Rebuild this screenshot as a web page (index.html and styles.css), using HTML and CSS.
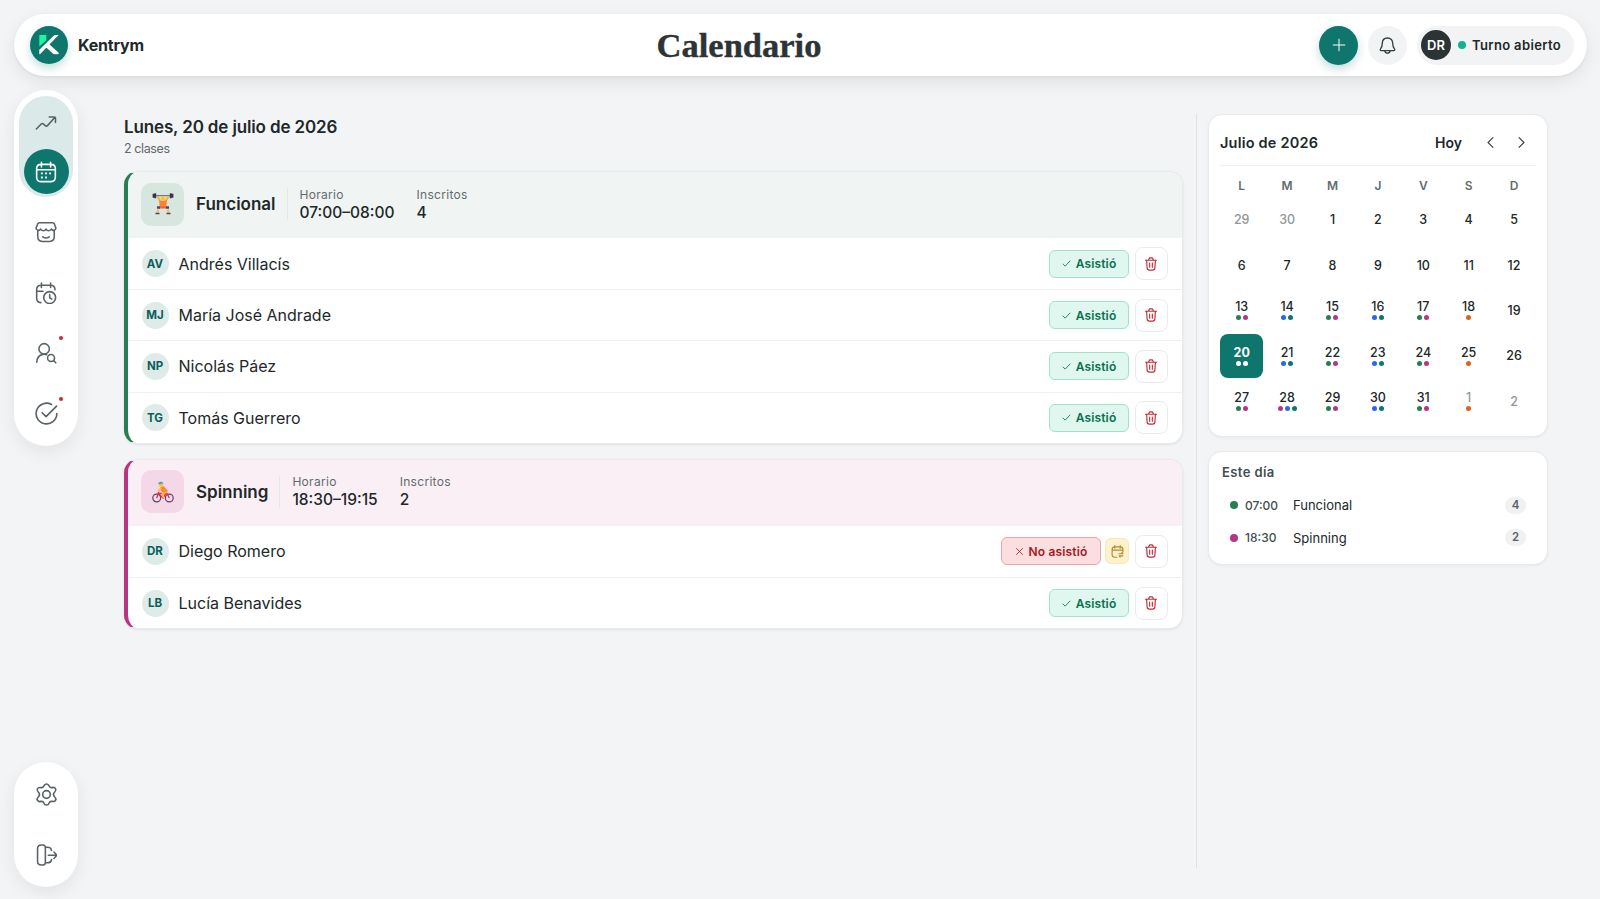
FILE: index.html
```html
<!DOCTYPE html>
<html lang="es">
<head>
  <meta charset="UTF-8">
  <meta name="viewport" content="width=device-width, initial-scale=1.0">
  <title>Calendario - Kentrym</title>
  <link rel="stylesheet" href="styles.css">
</head>
<body>
  <!-- Shared icons -->
  <svg class="sprite" width="0" height="0">
    <symbol id="i-check" viewBox="0 0 24 24"><path d="M3 13.500l5.500 5.500L21 5.500"/></symbol>
    <symbol id="i-x" viewBox="0 0 24 24"><path d="M4 4l16 16M20 4L4 20"/></symbol>
    <symbol id="i-trash" viewBox="0 0 24 24"><path d="M2.500 5.500h19M4.500 5.500l.8 13a4 4 0 0 0 4 4h5.400a4 4 0 0 0 4-4l.8-13M8 5.200l.7-2.200a2 2 0 0 1 1.900-1.500h2.800a2 2 0 0 1 1.900 1.500l.7 2.200M9.700 10.500v7M14.300 10.500v7"/></symbol>
  </svg>

  <header class="topbar">
    <div class="brand">
      <span class="logo">
        <svg width="22" height="22" viewBox="0 0 22 22"><path d="M1.300 1h7v5.300L1.300 12.500z" fill="#1df5a0"/><path d="M1.300 20.300v-4.600L15.200 2.200C16 1.400 16.700 1 17.800 1h2.900L3.900 18.300c-1 1-1.500 2-2.600 2zM8.300 13.600l3.200-3.200 8.900 8.100c.8.900.3 1.800-.8 1.800h-2.700c-1 0-1.700-.3-2.400-1z" fill="#fff"/></svg>
      </span>
      <span class="brand-name">Kentrym</span>
    </div>
    <h1>Calendario</h1>
    <div class="actions">
      <button class="add"><svg class="icon" width="14" height="14" viewBox="0 0 24 24"><path d="M12 2v20M2 12h20"/></svg></button>
      <button class="bell"><svg class="icon" width="19" height="19" viewBox="0 0 24 24"><path d="M12 2.500c-4.200 0-6.600 3-6.600 7 0 4.200-1 5.500-2.200 6.800-.8.900-.4 2.200.9 2.200h15.800c1.300 0 1.700-1.300.9-2.200-1.200-1.300-2.200-2.600-2.200-6.800 0-4-2.400-7-6.600-7zM8.500 18.800c.4 1.800 1.700 2.900 3.500 2.900s3.100-1.100 3.500-2.900"/></svg></button>
      <div class="shift">
        <span class="user">DR</span>
        <i class="online"></i>
        <span>Turno abierto</span>
      </div>
    </div>
  </header>

  <div class="layout">
    <aside class="rail">
      <nav class="pill">
        <div class="group">
          <a class="nav"><svg class="icon" width="22" height="22" viewBox="0 0 24 24"><path d="M1.500 18.500l5-5.200c1-1 1.800-1 2.800-.1l1.800 1.600c1 .9 1.900.8 2.800-.2l7.600-8.500M15.500 5.500l5.500-.1c1 0 1.400.5 1.400 1.400l-.1 4.500"/></svg></a>
          <a class="nav active"><svg class="icon" width="22" height="22" viewBox="0 0 24 24"><path d="M7 1.500v5M17 1.500v5M1.800 9.500h20.400M6.500 3.700h11c3.300 0 4.700 1.600 4.700 4.800v9c0 3.300-1.400 5-4.700 5h-11c-3.300 0-4.700-1.700-4.700-5v-9c0-3.200 1.400-4.800 4.700-4.800z"/><path class="dash" d="M6.500 13.500h2M11 13.500h2M15.500 13.500h2M6.500 18h2M11 18h2"/></svg></a>
        </div>
        <a class="nav"><svg class="icon" width="22" height="22" viewBox="0 0 24 24"><path d="M3 10v7c0 3.800 1.500 5.300 5 5.300h8c3.500 0 5-1.500 5-5.300v-7M4.800 2h14.400c1 0 1.500.4 1.900 1.200l1.500 3.800c.8 2.600-3.200 4.800-4.800 1.700-1.200 2.500-4.700 2.500-5.800 0-1.100 2.500-4.600 2.500-5.800 0C4.600 11.800.6 9.600 1.400 7l1.500-3.800C3.300 2.400 3.800 2 4.800 2zM8.500 17.200c2 1.600 5 1.600 7 0"/></svg></a>
        <a class="nav"><svg class="icon" width="22" height="22" viewBox="0 0 24 24"><path d="M7 1v5M17 1v5M1.800 10h7M21.800 8.500c0-3.300-1.500-5-5-5H6.800c-3.500 0-5 1.700-5 5v9c0 3.400 1.400 5 4.600 5"/><circle cx="16" cy="17" r="6.500"/><path d="M16 13.800v3.400l2.300 1.300"/></svg></a>
        <a class="nav notify"><svg class="icon" width="22" height="22" viewBox="0 0 24 24"><circle cx="10" cy="7.500" r="5.700"/><path d="M2 22c.2-5 2.800-7.800 6.500-8.500 1.500-.3 3-.2 4.300.3"/><circle cx="17.500" cy="17.500" r="3.800"/><path d="M20.300 20.300l2.400 2.400"/></svg></a>
        <a class="nav notify"><svg class="icon" width="23" height="23" viewBox="0 0 24 24"><path d="M17.200 2.600A10.800 10.800 0 1 0 22.800 12M7.500 11.200l4 4L22.500 4.300"/></svg></a>
      </nav>
      <nav class="pill">
        <a class="nav"><svg class="icon" width="23" height="23" viewBox="0 0 24 24"><circle cx="12" cy="12" r="4"/><path d="M9.200 3.200C9.800 1.600 10.700 1 12 1s2.200.6 2.800 2.200c.5 1.400 1.600 1.900 3 1.600 1.700-.4 2.900-.1 3.600 1.100.7 1.200.4 2.400-.8 3.500-1.500 1.500-1.500 3.700 0 5.200 1.200 1.100 1.500 2.300.8 3.500-.7 1.200-1.900 1.500-3.600 1.100-1.400-.3-2.500.2-3 1.600-.6 1.600-1.500 2.200-2.800 2.200s-2.200-.6-2.800-2.200c-.5-1.400-1.600-1.900-3-1.600-1.700.4-2.900.1-3.600-1.100-.7-1.200-.4-2.400.8-3.500 1.500-1.500 1.500-3.700 0-5.200C2.200 8.300 1.900 7.100 2.600 5.900c.7-1.200 1.900-1.500 3.600-1.100 1.400.3 2.500-.2 3-1.600z"/></svg></a>
        <a class="nav"><svg class="icon" width="22" height="22" viewBox="0 0 24 24"><path d="M7.500 1h1.200c1.800 0 2.600 1 2.600 3v16c0 2-.8 3-2.600 3H7c-2.800 0-4.200-1.300-4.200-4V5c0-2.700 1.400-4 4.200-4zM11.500 3.500h2c2.800 0 4.300 1.200 4.500 3.500M11.500 20.500h2c2.800 0 4.300-1.200 4.500-3.500M14.500 12.300h9M20.700 8.800l3.200 3.500-3.200 3.500"/></svg></a>
      </nav>
    </aside>

    <main>
      <h2>Lunes, 20 de julio de 2026</h2>
      <p class="count">2 clases</p>

      <section class="class-card green">
        <div class="class-head">
          <span class="class-icon">
            <svg width="22" height="22" viewBox="0 0 22 22"><path d="M2.500 2.700h17" stroke="#536171" stroke-width="1"/><path d="M1.500.8v4M3.300.3v5M18.700.3v5M20.500.8v4" stroke="#3b3050" stroke-width="1.800"/><path d="M5.500 3.500L8 7.500M16.500 3.500L14 7.500" stroke="#f6b32c" stroke-width="2"/><circle cx="11" cy="5.200" r="2.300" fill="#ffc42c"/><path d="M7 7l4 1 4-1-.8 7.500H7.800z" fill="#fb8038"/><path d="M5 14.500h3M14 14.500h3" stroke="#59415f" stroke-width="2.500"/><path d="M8 13.500h6v2H8z" fill="#e8663c"/><path d="M5.800 16.500v3M16.200 16.500v3" stroke="#fcc22f" stroke-width="2"/><path d="M3.500 20.500h4M14.500 20.500h4" stroke="#54404f" stroke-width="1.500"/></svg>
          </span>
          <h3>Funcional</h3>
          <dl><dt>Horario</dt><dd>07:00–08:00</dd></dl>
          <dl><dt>Inscritos</dt><dd>4</dd></dl>
        </div>
        <div class="person"><span class="avatar">AV</span><span class="name">Andrés Villacís</span><button class="status yes"><svg class="icon"><use href="#i-check"/></svg>Asistió</button><button class="delete"><svg class="icon"><use href="#i-trash"/></svg></button></div>
        <div class="person"><span class="avatar">MJ</span><span class="name">María José Andrade</span><button class="status yes"><svg class="icon"><use href="#i-check"/></svg>Asistió</button><button class="delete"><svg class="icon"><use href="#i-trash"/></svg></button></div>
        <div class="person"><span class="avatar">NP</span><span class="name">Nicolás Páez</span><button class="status yes"><svg class="icon"><use href="#i-check"/></svg>Asistió</button><button class="delete"><svg class="icon"><use href="#i-trash"/></svg></button></div>
        <div class="person"><span class="avatar">TG</span><span class="name">Tomás Guerrero</span><button class="status yes"><svg class="icon"><use href="#i-check"/></svg>Asistió</button><button class="delete"><svg class="icon"><use href="#i-trash"/></svg></button></div>
      </section>

      <section class="class-card pink">
        <div class="class-head">
          <span class="class-icon">
            <svg width="22" height="22" viewBox="0 0 22 22" fill="none"><circle cx="4.700" cy="17" r="3.900" stroke="#5b4369" stroke-width="1.200"/><circle cx="17.300" cy="17" r="3.900" stroke="#5b4369" stroke-width="1.200"/><path d="M4.700 17l2-6M6 12.500h9l2.300 4.500M6.300 12.500l4.700 4.500 3.500-5" stroke="#e0284f" stroke-width="1.300"/><path d="M8 6.500l3.500-1.500L16 10l-3 2.500-3.500-2z" fill="#fb8a36"/><path d="M9 7l-2.500 3.500M14.500 11.500l-4 1 1 4.500" stroke="#ffbd2e" stroke-width="1.800"/><circle cx="8.800" cy="3.500" r="2.200" fill="#fcc22f"/><path d="M6 3C6 .5 10.500-.6 11.500 2.600z" fill="#409dda"/></svg>
          </span>
          <h3>Spinning</h3>
          <dl><dt>Horario</dt><dd>18:30–19:15</dd></dl>
          <dl><dt>Inscritos</dt><dd>2</dd></dl>
        </div>
        <div class="person"><span class="avatar">DR</span><span class="name">Diego Romero</span><button class="status no"><svg class="icon"><use href="#i-x"/></svg>No asistió</button><button class="recover"><svg class="icon" width="13" height="13" viewBox="0 0 24 24"><path d="M7 1v5M17 1v5M2 9.500h20M22 13V8.500c0-3.300-1.500-5-5-5H7c-3.500 0-5 1.700-5 5v9c0 3.400 1.500 5 5 5h4M14.500 16h7.500l-2-2M22 20h-7l2 2.500"/></svg></button><button class="delete"><svg class="icon"><use href="#i-trash"/></svg></button></div>
        <div class="person"><span class="avatar">LB</span><span class="name">Lucía Benavides</span><button class="status yes"><svg class="icon"><use href="#i-check"/></svg>Asistió</button><button class="delete"><svg class="icon"><use href="#i-trash"/></svg></button></div>
      </section>
    </main>

    <aside class="side">
      <section class="calendar">
        <div class="cal-head">
          <h4>Julio de 2026</h4>
          <span class="today">Hoy</span>
          <svg class="icon" width="13" height="13" viewBox="0 0 24 24"><path d="M16.500 3L7.500 12l9 9"/></svg>
          <svg class="icon" width="13" height="13" viewBox="0 0 24 24"><path d="M7.500 3l9 9-9 9"/></svg>
        </div>
        <div class="weekdays"><span>L</span><span>M</span><span>M</span><span>J</span><span>V</span><span>S</span><span>D</span></div>
        <div class="days">
          <div class="out">29</div><div class="out">30</div><div>1</div><div>2</div><div>3</div><div>4</div><div>5</div>
          <div>6</div><div>7</div><div>8</div><div>9</div><div>10</div><div>11</div><div>12</div>
          <div>13<p><i class="g"></i><i class="p"></i></p></div>
          <div>14<p><i class="b"></i><i class="t"></i></p></div>
          <div>15<p><i class="g"></i><i class="p"></i></p></div>
          <div>16<p><i class="b"></i><i class="t"></i></p></div>
          <div>17<p><i class="g"></i><i class="p"></i></p></div>
          <div>18<p><i class="o"></i></p></div>
          <div>19</div>
          <div class="selected">20<p><i></i><i></i></p></div>
          <div>21<p><i class="b"></i><i class="t"></i></p></div>
          <div>22<p><i class="g"></i><i class="p"></i></p></div>
          <div>23<p><i class="b"></i><i class="t"></i></p></div>
          <div>24<p><i class="g"></i><i class="p"></i></p></div>
          <div>25<p><i class="o"></i></p></div>
          <div>26</div>
          <div>27<p><i class="g"></i><i class="p"></i></p></div>
          <div>28<p><i class="p"></i><i class="b"></i><i class="t"></i></p></div>
          <div>29<p><i class="g"></i><i class="p"></i></p></div>
          <div>30<p><i class="b"></i><i class="t"></i></p></div>
          <div>31<p><i class="g"></i><i class="p"></i></p></div>
          <div class="out">1<p><i class="o"></i></p></div>
          <div class="out">2</div>
        </div>
      </section>

      <section class="agenda">
        <h5>Este día</h5>
        <div class="event"><i class="g"></i><time>07:00</time><span>Funcional</span><b>4</b></div>
        <div class="event"><i class="p"></i><time>18:30</time><span>Spinning</span><b>2</b></div>
      </section>
    </aside>
  </div>
</body>
</html>
```
FILE: styles.css
```css
* {
  box-sizing: border-box;
  margin: 0;
  padding: 0;
}
body {
  height: 899px;
  padding: 14px 13px 12px 14px;
  overflow: hidden;
  background: #f3f4f6;
  color: #202829;
  font-family: Inter, sans-serif;
  display: flex;
  flex-direction: column;
}
button {
  border: 0;
  font-family: inherit;
  display: flex;
  align-items: center;
  justify-content: center;
  flex: none;
}
.sprite {
  position: absolute;
}
.icon {
  fill: none;
  stroke: currentColor;
  stroke-width: 1.7;
  stroke-linecap: round;
  stroke-linejoin: round;
  flex: none;
}

/* Top bar */
.topbar {
  flex: none;
  height: 62px;
  padding: 0 13px 0 16px;
  border-radius: 31px;
  background: #fff;
  box-shadow: 0 6px 18px rgba(0, 0, 0, 0.08), 0 1px 3px rgba(0, 0, 0, 0.06);
  display: grid;
  grid-template-columns: 624px 170px 1fr;
  align-items: center;
}
.brand {
  display: flex;
  align-items: center;
  gap: 10px;
}
.logo {
  width: 38px;
  height: 38px;
  border-radius: 50%;
  background: #0f766e;
  box-shadow: 0 4px 9px rgba(15, 118, 110, 0.25);
  display: flex;
  align-items: center;
  justify-content: center;
}
.brand-name {
  font-size: 16px;
  font-weight: 700;
  letter-spacing: -0.2px;
}
h1 {
  color: #2d3435;
  font: bold 34.5px "Liberation Serif", serif;
  text-align: center;
  -webkit-text-stroke: 0.4px #2d3435;
}
.actions {
  display: flex;
  justify-content: flex-end;
  align-items: center;
  gap: 10px;
}
.add,
.bell {
  width: 39px;
  height: 39px;
  border-radius: 50%;
}
.add {
  background: #0f766e;
  color: #fff;
  box-shadow: 0 4px 10px rgba(15, 118, 110, 0.25);
}
.bell {
  background: #f2f3f5;
  color: #354043;
}
.shift {
  width: 157px;
  height: 39px;
  padding: 0 4px;
  border-radius: 20px;
  background: #f2f3f4;
  font-size: 13px;
  font-weight: 600;
  letter-spacing: 0.35px;
  white-space: nowrap;
  display: flex;
  align-items: center;
}
.user {
  width: 30px;
  height: 30px;
  border-radius: 50%;
  background: #2c3335;
  color: #fff;
  font-size: 13px;
  letter-spacing: 0;
  display: flex;
  align-items: center;
  justify-content: center;
}
.online {
  width: 8px;
  height: 8px;
  margin: 0 6px 0 7px;
  border-radius: 50%;
  background: #10b48c;
}

.layout {
  flex: 1;
  display: flex;
}

/* Side navigation */
.rail {
  width: 64px;
  margin-top: 14px;
  display: flex;
  flex-direction: column;
  justify-content: space-between;
}
.pill {
  padding: 6px 5px 2px;
  border-radius: 32px;
  background: #fff;
  box-shadow: 0 6px 18px rgba(0, 0, 0, 0.07);
  display: flex;
  flex-direction: column;
  align-items: center;
}
.pill:first-child {
  height: 356px;
}
.pill:last-child {
  height: 125px;
  padding-top: 2px;
}
.nav {
  width: 54px;
  height: 60.5px;
  flex: none;
  color: #596365;
  display: flex;
  align-items: center;
  justify-content: center;
  position: relative;
}
.group {
  flex: none;
  width: 54px;
  height: 101px;
  margin-bottom: 5px;
  padding-top: 4px;
  border-radius: 27px;
  background: #dbeae9;
  display: flex;
  flex-direction: column;
  align-items: center;
}
.group .nav {
  width: 45px;
  height: 45px;
  margin-bottom: 4px;
}
.group .active {
  border-radius: 50%;
  background: #0f766e;
  color: #fff;
}
.dash {
  stroke-width: 2;
  stroke-linecap: butt;
}
.notify::after {
  content: "";
  position: absolute;
  top: 13px;
  right: 10px;
  width: 4px;
  height: 4px;
  border-radius: 50%;
  background: #c92c2c;
}

/* Classes of the day */
main {
  width: 1059px;
  margin-left: 46px;
  padding-top: 39px;
}
h2 {
  height: 24px;
  line-height: 25px;
  font-size: 17px;
  font-weight: 600;
  letter-spacing: -0.14px;
}
.count {
  height: 32px;
  line-height: 20px;
  color: #5e686a;
  font-size: 12.5px;
  letter-spacing: -0.4px;
}
.class-card {
  width: 1059px;
  margin-bottom: 15px;
  border: 1px solid #e7eaec;
  border-left: 4px solid #277e51;
  border-radius: 14px;
  overflow: hidden;
  background: #fff;
  box-shadow: 0 1px 3px rgba(0, 0, 0, 0.08);
}
.class-head {
  height: 66px;
  padding: 0 0 2px 13px;
  background: #f0f4f3;
  display: flex;
  align-items: center;
}
.class-icon {
  width: 43px;
  height: 43px;
  margin-right: 12px;
  border-radius: 10px;
  background: #d7e7df;
  display: flex;
  align-items: center;
  justify-content: center;
}
.pink {
  border-left-color: #b83583;
}
.pink .class-head {
  background: #fbeff6;
}
.pink .class-icon {
  background: #f4d8e8;
}
h3 {
  font-size: 17px;
  font-weight: 600;
  height: 32px;
  line-height: 32px;
  padding-right: 11px;
  border-right: 1px solid #e2e7e7;
}
dl {
  margin-left: 12px;
  margin-right: 10px;
}
dt {
  color: #626c6e;
  font-size: 12px;
  letter-spacing: 0.3px;
  line-height: 17px;
}
dd {
  font-size: 15.5px;
  font-weight: 500;
  line-height: 19px;
  margin-bottom: 1px;
}
.person {
  height: 51.2px;
  padding: 0 14px 0 13.5px;
  display: flex;
  align-items: center;
}
.person + .person {
  border-top: 1px solid #edf0f1;
}
.avatar {
  width: 27px;
  height: 27px;
  margin-right: 10px;
  border-radius: 50%;
  background: #deebe9;
  color: #0b5f59;
  font-size: 11.5px;
  font-weight: 700;
  display: flex;
  align-items: center;
  justify-content: center;
}
.name {
  flex: 1;
  font-size: 16px;
}
.status {
  height: 28px;
  border: 1px solid #9fe3c9;
  border-radius: 6px;
  background: #dff7ee;
  color: #08704e;
  font-size: 12px;
  font-weight: 600;
  letter-spacing: 0.15px;
  gap: 5px;
}
.status .icon {
  width: 9px;
  height: 9px;
  stroke-width: 2.2;
}
.yes {
  width: 80px;
}
.no {
  width: 100px;
  border-color: #f0a5a9;
  background: #fbdfe0;
  color: #a81722;
}
.recover {
  width: 24px;
  height: 26px;
  margin-left: 4px;
  border: 1px solid #fae6b1;
  border-radius: 6px;
  background: #fdf1cf;
  color: #b28b25;
}
.recover .icon {
  stroke-width: 2;
}
.delete {
  width: 33px;
  height: 33px;
  margin-left: 6px;
  padding-right: 1px;
  border: 1px solid #e9ebee;
  border-radius: 8px;
  background: #fff;
  color: #c52d36;
}
.delete .icon {
  width: 14px;
  height: 14px;
  stroke-width: 2;
}

/* Calendar column */
.side {
  width: 352px;
  height: 754px;
  margin: 38px 0 0 13px;
  padding-left: 11px;
  border-left: 1px solid #dfe2e4;
}
.calendar,
.agenda {
  border: 1px solid #e8eaec;
  border-radius: 14px;
  background: #fff;
  box-shadow: 0 1px 3px rgba(0, 0, 0, 0.05);
}
.calendar {
  height: 323px;
  padding: 0 11px;
}
.cal-head {
  height: 51px;
  padding-top: 4px;
  border-bottom: 1px solid #eef0f1;
  display: flex;
  align-items: center;
}
h4 {
  flex: 1;
  font-size: 14.5px;
  font-weight: 600;
  letter-spacing: 0.2px;
}
.today {
  font-size: 14px;
  font-weight: 600;
  margin-right: 22px;
}
.cal-head .icon {
  stroke-width: 2.2;
  color: #3d4648;
  margin-right: 8px;
}
.cal-head .icon:nth-of-type(1) {
  margin-right: 18px;
}
.weekdays,
.days {
  display: grid;
  grid-template-columns: repeat(7, 43.4px);
  column-gap: 2px;
  text-align: center;
}
.weekdays {
  height: 32px;
  line-height: 40px;
  color: #626c6e;
  font-size: 12px;
  font-weight: 600;
}
.days {
  grid-auto-rows: 43.4px;
  row-gap: 2px;
  font-size: 12.5px;
  font-weight: 500;
}
.days div {
  line-height: 15px;
  border-radius: 8px;
  display: flex;
  flex-direction: column;
  align-items: center;
  justify-content: center;
}
.days p {
  display: flex;
  gap: 2px;
  margin: 1px 0 1px;
}
.days i {
  width: 5px;
  height: 5px;
  border-radius: 50%;
  background: #fff;
}
.days .out {
  color: #929799;
}
.days .selected {
  background: #0f766e;
  color: #fff;
  font-weight: 700;
}
.days i.g,
i.g {
  background: #277e51;
}
.days i.p,
i.p {
  background: #b83583;
}
.days i.b {
  background: #2868e8;
}
.days i.t {
  background: #0f766e;
}
.days i.o {
  background: #d9641d;
}
.agenda {
  height: 114px;
  margin-top: 14px;
  padding: 9px 13px;
}
h5 {
  height: 28px;
  line-height: 23px;
  color: #434e50;
  font-size: 13px;
  font-weight: 600;
  letter-spacing: 0.4px;
}
.event {
  height: 32.5px;
  padding: 0 8px;
  font-size: 13px;
  display: flex;
  align-items: center;
}
.event i {
  width: 8px;
  height: 8px;
  border-radius: 50%;
  margin-right: 7px;
}
.event time {
  width: 48px;
  color: #434e50;
  font-size: 12px;
  font-weight: 500;
}
.event span {
  flex: 1;
}
.event b {
  width: 21px;
  height: 17px;
  line-height: 17px;
  border-radius: 9px;
  background: #f0f1f3;
  color: #596365;
  font-size: 11.5px;
  font-weight: 600;
  text-align: center;
}
```
